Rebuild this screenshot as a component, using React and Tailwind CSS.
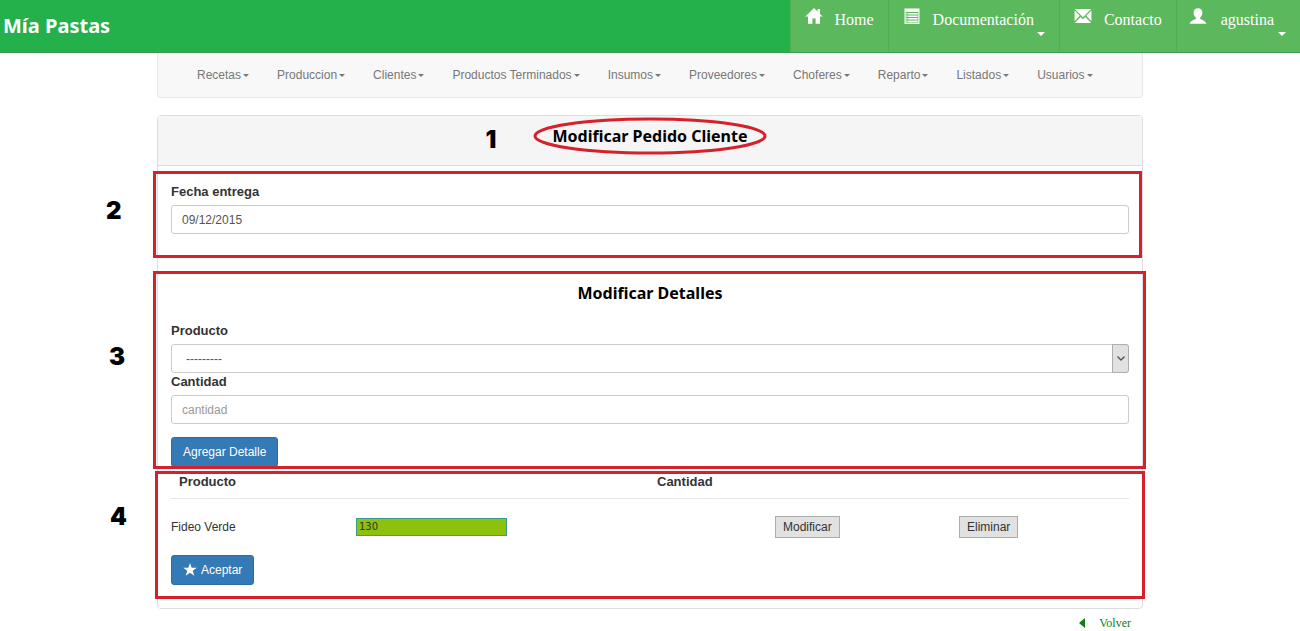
const topLinks = [
  { label: "Home", icon: HomeIcon, box: "gap-3 px-3.5" },
  { label: "Documentación", icon: ListIcon, caret: true, box: "gap-3 pl-3.5 pr-[25px]" },
  { label: "Contacto", icon: EnvelopeIcon, box: "gap-3 px-3.5" },
  { label: "agustina", icon: UserIcon, caret: true, box: "gap-3.5 pl-3 pr-[26px]" },
];

const menus = [
  "Recetas",
  "Produccion",
  "Clientes",
  "Productos Terminados",
  "Insumos",
  "Proveedores",
  "Choferes",
  "Reparto",
  "Listados",
  "Usuarios",
];

function HomeIcon() {
  return (
    <svg viewBox="0 0 18 16" className="h-4 w-[18px]" fill="currentColor" aria-hidden="true">
      <path d="M9 0 17.6 8.6H15V15.8H10.6V10.4H7.4V15.8H3V8.6H.4L9 0ZM12.6 1H15V6L12.6 3.6Z" />
    </svg>
  );
}

function ListIcon() {
  return (
    <svg viewBox="0 0 18 16" className="h-4 w-[18px]" aria-hidden="true">
      <path
        fill="currentColor"
        fillRule="evenodd"
        d="M1.5.5H16.5V16H1.5ZM3 4V5H15V4ZM3 6.5V7.5H15V6.5ZM3 9V10H15V9ZM3 11.5V12.5H15V11.5ZM3 14V14.6H15V14Z"
      />
      <path d="M3 3.5V14.5M15 3.5V14.5M4.8 3.5V14.5" stroke="#5cb85c" strokeWidth=".6" />
    </svg>
  );
}

function EnvelopeIcon() {
  return (
    <svg viewBox="0 0 18 16" className="h-4 w-[18px]" fill="currentColor" aria-hidden="true">
      <path d="M.8 1H17.2L9 9.2Z" />
      <path d="M.6 2.6 5.8 7.8.6 13.2ZM17.4 2.6 12.2 7.8 17.4 13.2Z" />
      <path d="M.8 15 6.6 8.9 9 11.2 11.4 8.9 17.2 15Z" />
    </svg>
  );
}

function UserIcon() {
  return (
    <svg viewBox="0 0 18 16" className="h-4 w-[18px]" fill="currentColor" aria-hidden="true">
      <path d="M9 .3C11.8.3 13.4 2 13.4 4.6 13.4 6.6 12.6 8.4 11.2 9.5V10.8C11.4 11.6 16.8 12.4 17.3 15.8H.7C1.2 12.4 6.6 11.6 6.8 10.8V9.5C5.4 8.4 4.6 6.6 4.6 4.6 4.6 2 6.2.3 9 .3Z" />
    </svg>
  );
}

function StarIcon() {
  return (
    <svg viewBox="0 0 14 14" className="h-3.5 w-3.5" fill="currentColor" aria-hidden="true">
      <path d="M7 0 8.6 4.7H13.8L9.7 7.8 11.3 12.8 7 9.8 2.7 12.8 4.3 7.8.2 4.7H5.4Z" />
    </svg>
  );
}

function Caret({ className }) {
  return (
    <svg viewBox="0 0 8 4" className={className} fill="currentColor" aria-hidden="true">
      <path d="M0 0H8L4 4Z" />
    </svg>
  );
}

function Mark({ className, children }) {
  return (
    <span className={`absolute font-[Inter,sans-serif] text-2xl leading-6 font-black text-black ${className}`}>
      {children}
    </span>
  );
}

function Frame({ className }) {
  return <div className={`pointer-events-none absolute inset-y-0 border-3 border-[#d4212c] ${className}`} />;
}

const field =
  "block h-[29px] w-full rounded-[3px] border border-[#ccc] bg-white text-xs text-[#555] placeholder:text-[#999]";
const label = "mb-1 block text-[13px] leading-[18px] font-bold text-[#333]";
const primary =
  "flex h-[30px] items-center gap-1 rounded-[3px] border border-[#2e6da4] bg-[#337ab7] px-[11px] text-xs text-white";
const plain = "h-[22px] border border-[#adadad] bg-[#e1e1e1] px-[7px] text-xs leading-5 text-[#333]";
const heading = "text-center font-['Noto_Sans',sans-serif] text-base font-bold text-black";

export default function App() {
  return (
    <div className="bg-white font-['Liberation_Sans',Arial,sans-serif] text-xs text-[#333]">
      <header className="flex h-[53px] items-stretch justify-between border-b border-[#3f9a52] bg-[#24b14c]">
        <a href="#" className="flex items-center pl-[3px] font-['Noto_Sans',sans-serif] text-xl font-bold text-white">
          Mía Pastas
        </a>
        <nav className="flex font-['Liberation_Serif',serif] text-base text-white">
          {topLinks.map(({ label: text, icon: Icon, caret, box }) => (
            <a
              key={text}
              href="#"
              className={`relative flex items-start border-l border-[#4fae50] bg-[#5cb85c] pt-2 ${box}`}
            >
              <Icon />
              <span className="leading-6">{text}</span>
              {caret && <Caret className="absolute right-3.5 bottom-4 h-1 w-2" />}
            </a>
          ))}
        </nav>
      </header>

      <div className="mx-auto w-full max-w-[986px]">
        <nav className="flex h-[45px] items-center gap-7 rounded-b border border-t-0 border-[#e7e7e7] bg-[#f8f8f8] pl-[39px] text-[#777]">
          {menus.map((text) => (
            <a key={text} href="#" className="flex items-center gap-0.5 whitespace-nowrap">
              {text}
              <Caret className="h-[3px] w-1.5" />
            </a>
          ))}
        </nav>

        <main className="mt-[17px] rounded border border-[#ddd]">
          <div className="flex h-[50px] justify-center border-b border-[#ddd] bg-[#f5f5f5] pt-2">
            <h1 className={`relative h-6 ${heading}`}>
              Modificar Pedido Cliente
              <svg
                viewBox="0 0 234 38"
                className="pointer-events-none absolute -top-[7px] left-1/2 h-[38px] w-[234px] -translate-x-1/2"
                fill="none"
                aria-hidden="true"
              >
                <ellipse cx="117" cy="19" rx="115" ry="17" stroke="#d4212c" strokeWidth="3" />
              </svg>
              <Mark className="top-1 -left-[67px]">1</Mark>
            </h1>
          </div>

          <form onSubmit={(e) => e.preventDefault()}>
            <section className="relative mt-[5px] px-[13px] pt-3 pb-6">
              <label htmlFor="fecha" className={label}>Fecha entrega</label>
              <input id="fecha" type="text" defaultValue="09/12/2015" className={`pl-2.5 ${field}`} />
              <Frame className="-left-[5px] right-0" />
              <Mark className="top-7 -left-[52px]">2</Mark>
            </section>

            <section className="relative mt-[13px] px-[13px] pt-2.5 pb-0.5">
              <h2 className={`mb-[17px] ${heading}`}>Modificar Detalles</h2>
              <label htmlFor="producto" className={label}>Producto</label>
              <div className="relative">
                <select id="producto" className={`appearance-none pl-3.5 ${field}`}>
                  <option>---------</option>
                </select>
                <span className="pointer-events-none absolute inset-y-0 right-0 flex w-[17px] items-center justify-center rounded-r-[3px] border border-[#adadad] bg-[#e1e1e1]">
                  <svg viewBox="0 0 8 5" className="h-[5px] w-2" fill="none" stroke="#555" strokeWidth="1.4" aria-hidden="true">
                    <path d="M.5.5 4 4 7.5.5" />
                  </svg>
                </span>
              </div>
              <label htmlFor="cantidad" className={label}>Cantidad</label>
              <input id="cantidad" type="text" placeholder="cantidad" className={`pl-2.5 ${field}`} />
              <button type="button" className={`mt-[13px] ${primary}`}>Agregar Detalle</button>
              <Frame className="-left-[5px] -right-1" />
              <Mark className="top-[74px] -left-[49px]">3</Mark>
            </section>

            <section className="relative mt-0.5 px-[13px] pb-3.5">
              <table className="w-full table-fixed text-left">
                <colgroup>
                  <col className="w-[185px]" />
                  <col className="w-[301px]" />
                  <col className="w-[118px]" />
                  <col className="w-[184px]" />
                  <col />
                </colgroup>
                <thead>
                  <tr className="h-[27px] border-b border-[#e5e5e5] align-top text-[13px] leading-[22px]">
                    <th colSpan={2} className="pl-2">Producto</th>
                    <th colSpan={3}>Cantidad</th>
                  </tr>
                </thead>
                <tbody>
                  <tr className="h-[57px]">
                    <td>Fideo Verde</td>
                    <td colSpan={2}>
                      <input
                        type="text"
                        aria-label="Cantidad de Fideo Verde"
                        defaultValue="130"
                        className="block h-[18px] w-[151px] border border-[#3a9d8b] bg-[#8cc10c] pl-0.5 font-['DejaVu_Sans',sans-serif] text-[10px]"
                      />
                    </td>
                    <td><button type="button" className={plain}>Modificar</button></td>
                    <td><button type="button" className={plain}>Eliminar</button></td>
                  </tr>
                </tbody>
              </table>
              <button type="submit" className={primary}>
                <StarIcon />
                Aceptar
              </button>
              <Frame className="-left-[3px] -right-[3px]" />
              <Mark className="top-[34px] -left-12">4</Mark>
            </section>
          </form>
          <div className="h-[9px]" />
        </main>

        <div className="flex justify-end pt-1 pr-3 font-['Liberation_Serif',serif] text-xs text-[#108010]">
          <a href="#" className="flex items-center gap-3.5">
            <svg viewBox="0 0 6 10" className="h-2.5 w-1.5" fill="currentColor" aria-hidden="true">
              <path d="M6 0V10L0 5Z" />
            </svg>
            <span className="leading-5">Volver</span>
          </a>
        </div>
      </div>
    </div>
  );
}
